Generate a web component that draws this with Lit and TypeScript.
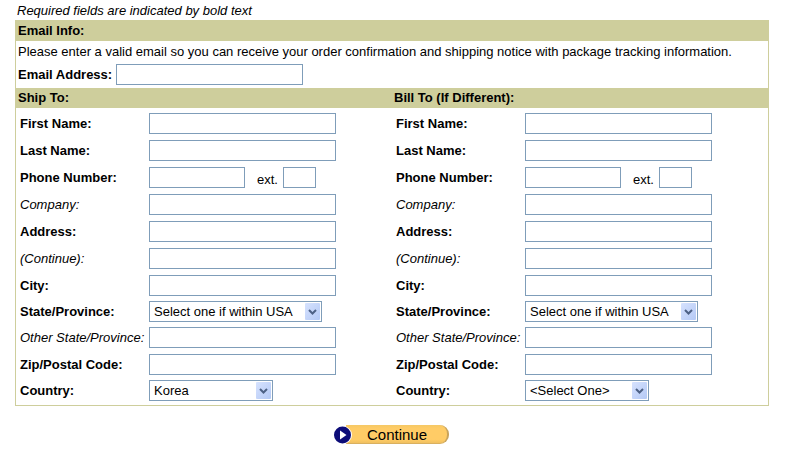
import { LitElement, html, css, svg } from "lit";
import { customElement, property } from "lit/decorators.js";

const shared = css`
  *,
  *::before,
  *::after {
    box-sizing: border-box;
  }
  h2 {
    margin: 0;
    padding: 0 2px;
    background: #cece9c;
    font-size: 13px;
    line-height: 20px;
  }
  label {
    font-weight: bold;
    white-space: nowrap;
  }
  .optional {
    font-weight: normal;
    font-style: italic;
  }
  input,
  select {
    height: 21px;
    margin: 0;
    border: 1px solid #7f9db9;
    border-radius: 0;
    background: #fff;
    color: #000;
    font: inherit;
  }
  input {
    width: 187px;
    padding: 0 2px;
  }
`;

interface Field {
  id: string;
  label: string;
  optional?: boolean;
  kind?: "phone" | "state" | "country";
}

const FIELDS: Field[] = [
  { id: "first", label: "First Name:" },
  { id: "last", label: "Last Name:" },
  { id: "phone", label: "Phone Number:", kind: "phone" },
  { id: "company", label: "Company:", optional: true },
  { id: "address", label: "Address:" },
  { id: "address2", label: "(Continue):", optional: true },
  { id: "city", label: "City:" },
  { id: "state", label: "State/Province:", kind: "state" },
  { id: "other", label: "Other State/Province:", optional: true },
  { id: "zip", label: "Zip/Postal Code:" },
  { id: "country", label: "Country:", kind: "country" },
];

@customElement("address-form")
export class AddressForm extends LitElement {
  @property() heading = "";
  @property() country = "";

  static styles = [
    shared,
    css`
      :host {
        display: block;
        min-width: 0;
      }
      .fields {
        padding: 2px 0 2px 4px;
      }
      .row {
        display: grid;
        grid-template-columns: 129px 1fr;
        align-items: center;
        padding: 3px 0;
      }
      .choice {
        padding: 2px 0;
      }
      .control {
        display: flex;
        align-items: center;
      }
      .control .phone {
        width: 96px;
      }
      .control .ext {
        width: 33px;
      }
      .ext-label {
        width: 38px;
        padding: 4px 0 0 12px;
        font-weight: normal;
        line-height: 17px;
      }
      .picker {
        position: relative;
      }
      select {
        display: block;
        appearance: none;
        padding: 0 16px 2px 4px;
      }
      .state {
        width: 173px;
      }
      .country {
        width: 124px;
      }
      .arrow {
        position: absolute;
        top: 2px;
        right: 2px;
        width: 15px;
        height: 17px;
        pointer-events: none;
      }
    `,
  ];

  private arrow() {
    return html`<svg class="arrow" viewBox="0 0 15 17" aria-hidden="true">
      ${svg`
        <defs>
          <linearGradient id="face" x1="0" y1="0" x2="1" y2="1">
            <stop offset="0" stop-color="#d6e2fe" />
            <stop offset="1" stop-color="#b4c9f5" />
          </linearGradient>
        </defs>
        <rect width="15" height="17" rx="1" fill="url(#face)" />
        <path d="M4 7 L7.5 10.5 L11 7" fill="none" stroke="#4d6185" stroke-width="2" />`}
    </svg>`;
  }

  private control(field: Field) {
    switch (field.kind) {
      case "phone":
        return html`<input id="phone" class="phone" type="tel" />
          <label class="ext-label" for="ext">ext.</label>
          <input id="ext" class="ext" type="text" />`;
      case "state":
        return html`<div class="picker">
          <select id="state" class="state">
            <option>Select one if within USA</option>
          </select>
          ${this.arrow()}
        </div>`;
      case "country":
        return html`<div class="picker">
          <select id="country" class="country">
            <option>${this.country}</option>
          </select>
          ${this.arrow()}
        </div>`;
      default:
        return html`<input id=${field.id} type="text" />`;
    }
  }

  private row(field: Field) {
    const choice = field.kind === "state" || field.kind === "country";
    return html`<div class="row ${choice ? "choice" : ""}">
      <label class=${field.optional ? "optional" : ""} for=${field.id}>${field.label}</label>
      <div class="control">${this.control(field)}</div>
    </div>`;
  }

  render() {
    return html`<h2>${this.heading}</h2>
      <div class="fields">${FIELDS.map((field) => this.row(field))}</div>`;
  }
}

@customElement("app-root")
export class AppRoot extends LitElement {
  static styles = [
    shared,
    css`
      :host {
        display: block;
        padding: 1px 18px 0 15px;
        background: #fff;
        color: #000;
        font: 13px/20px "Liberation Sans", Arial, sans-serif;
      }
      .note {
        margin: 0;
        padding: 0 2px;
        line-height: 19px;
        font-style: italic;
      }
      .panel {
        border: 1px solid #cece9c;
      }
      .intro {
        margin: 0;
        padding: 0 2px;
        line-height: 22px;
      }
      .email {
        display: flex;
        align-items: center;
        gap: 4px;
        padding: 1px 2px 3px;
      }
      .addresses {
        display: grid;
        grid-template-columns: 1fr 1fr;
      }
      .actions {
        display: flex;
        justify-content: center;
        padding: 19px 2px 0 0;
      }
      button {
        display: flex;
        align-items: center;
        width: 115px;
        height: 19px;
        margin: 0;
        padding: 0;
        border: 0;
        background: none;
        color: #000;
        font: inherit;
        font-size: 15px;
      }
      .play {
        z-index: 1;
        flex: none;
        width: 18px;
        height: 18px;
      }
      .face {
        flex: 1;
        height: 19px;
        margin-left: -6px;
        padding-left: 2px;
        border-right: 2px solid #c9a45c;
        border-bottom: 1px solid #d9b060;
        border-radius: 0 9px 9px 0;
        background: linear-gradient(#f5c865, #ffcc66 20%, #ffcc66 80%, #f0c060);
        line-height: 19px;
      }
    `,
  ];

  render() {
    return html`<form @submit=${(e: Event) => e.preventDefault()}>
      <p class="note">Required fields are indicated by bold text</p>
      <div class="panel">
        <h2>Email Info:</h2>
        <p class="intro">
          Please enter a valid email so you can receive your order confirmation and shipping notice with package tracking information.
        </p>
        <div class="email">
          <label for="email">Email Address:</label>
          <input id="email" type="email" />
        </div>
        <div class="addresses">
          <address-form heading="Ship To:" country="Korea"></address-form>
          <address-form heading="Bill To (If Different):" country="<Select One>"></address-form>
        </div>
      </div>
      <div class="actions">
        <button type="submit">
          <svg class="play" viewBox="0 0 18 18" aria-hidden="true">
            <circle cx="9" cy="9" r="9" fill="#fff" />
            <circle cx="8.5" cy="9" r="8.5" fill="#0c0c78" />
            <path d="M6 4.5 L12.5 9 L6 13.5 Z" fill="#fff" />
          </svg>
          <span class="face">Continue</span>
        </button>
      </div>
    </form>`;
  }
}
